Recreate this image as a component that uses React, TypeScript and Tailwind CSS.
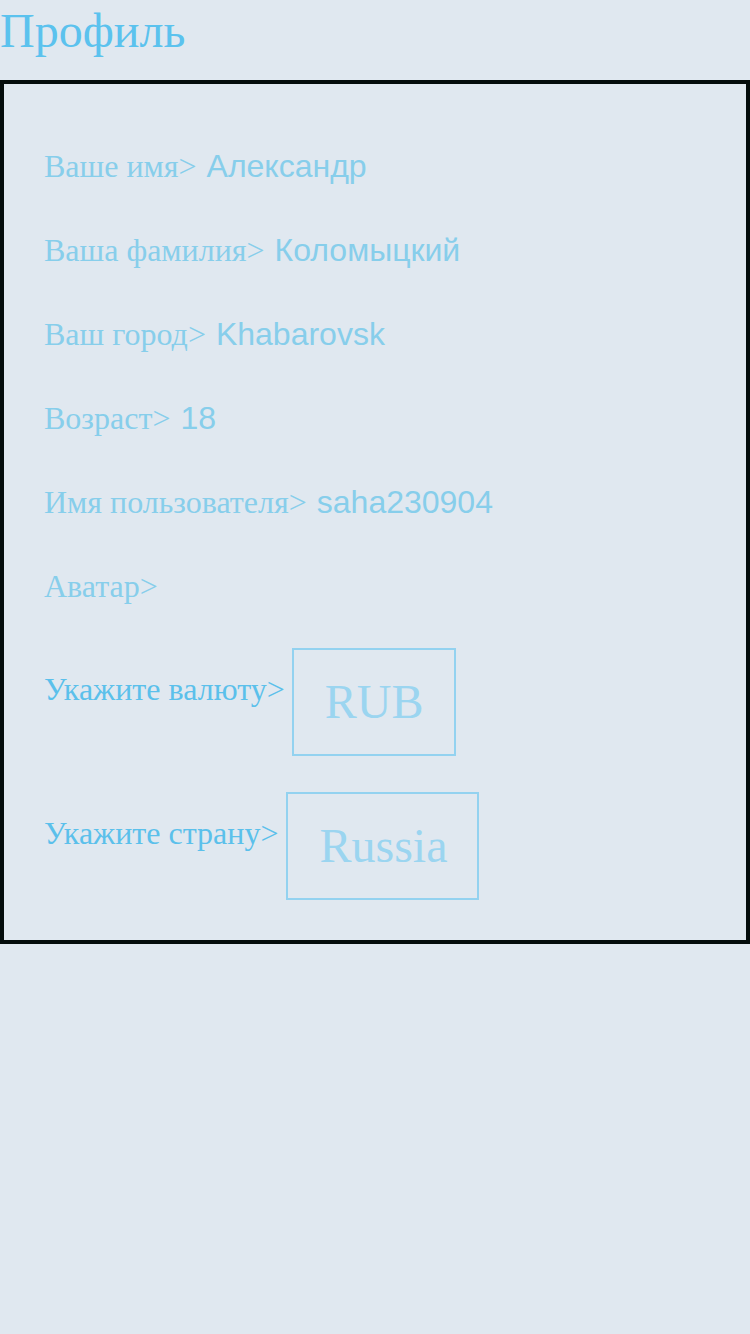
import React from 'react';

// Profile page: title + bordered card with user fields and two selectors
const rows: { label: string; value?: string }[] = [
  { label: 'Ваше имя>', value: 'Александр' },
  { label: 'Ваша фамилия>', value: 'Коломыцкий' },
  { label: 'Ваш город>', value: 'Khabarovsk' },
  { label: 'Возраст>', value: '18' },
  { label: 'Имя пользователя>', value: 'saha230904' },
  { label: 'Аватар>' },
];

const serif = { fontFamily: '"Liberation Serif", serif' };

const App: React.FC = () => {
  return (
    <div className="min-h-[1334px] w-[750px] bg-[#e0e8f0]" style={serif}>
      <h1 className="text-[48px] leading-[57px] text-[#5bc2ee] pt-[2px] h-[80px]">Профиль</h1>

      <div className="border-4 border-[#040c0c] p-10">
        {rows.map((r) => (
          <div key={r.label} className="h-[84px] flex items-center text-[32px] text-[#87ceeb]">
            <span>{r.label}</span>
            {r.value && (
              <span className="ml-[10px]" style={{ fontFamily: '"Liberation Sans", sans-serif' }}>
                {r.value}
              </span>
            )}
          </div>
        ))}

        <div className="flex items-start mt-5">
          <span className="mt-[23px] text-[32px] leading-[37px] text-[#5bc0eb]">Укажите валюту&gt;</span>
          <div className="ml-[7px] h-[108px] px-[31px] flex items-center border-2 border-[#93d2f0] text-[48px] text-[#9bd5f0]">
            RUB
          </div>
        </div>

        <div className="flex items-start mt-9">
          <span className="mt-[23px] text-[32px] leading-[37px] text-[#5bc0eb]">Укажите страну&gt;</span>
          <div className="ml-[8px] h-[108px] pl-[31px] pr-[29px] flex items-center border-2 border-[#93d2f0] text-[48px] text-[#9bd5f0]">
            Russia
          </div>
        </div>
      </div>
    </div>
  );
};

export default App;
